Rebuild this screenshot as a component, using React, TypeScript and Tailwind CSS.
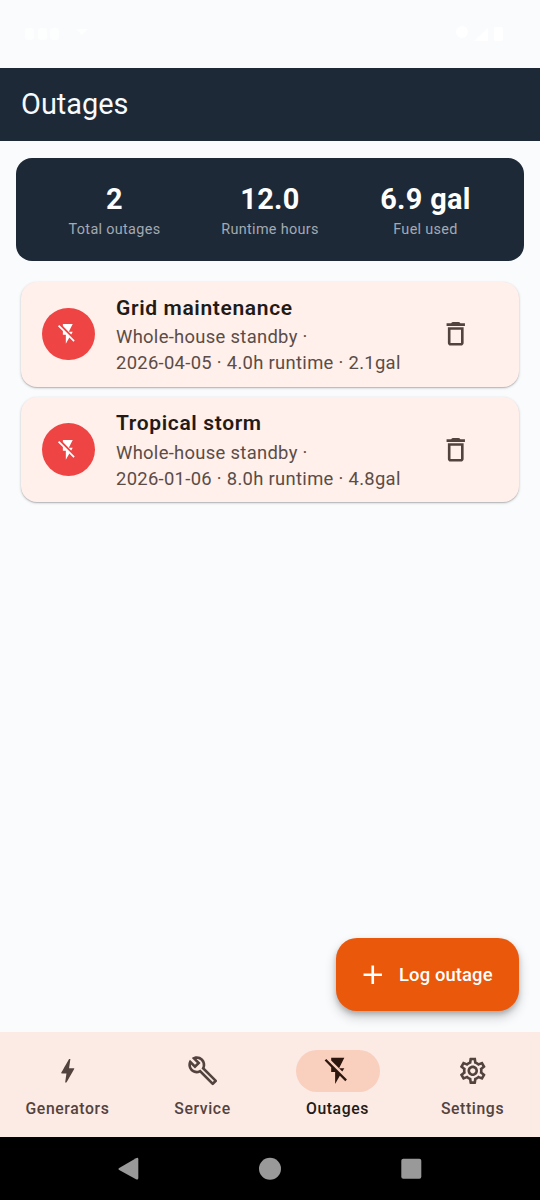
import React from 'react';
import {
  MdAdd,
  MdBolt,
  MdFlashOff,
  MdOutlineBuild,
  MdOutlineSettings,
} from 'react-icons/md';

interface Outage {
  id: string;
  title: string;
  generator: string;
  details: string;
}

const stats = [
  { label: 'Total outages', value: '2' },
  { label: 'Runtime hours', value: '12.0' },
  { label: 'Fuel used', value: '6.9 gal' },
];

const outages: Outage[] = [
  {
    id: '1',
    title: 'Grid maintenance',
    generator: 'Whole-house standby ·',
    details: '2026-04-05 · 4.0h runtime · 2.1gal',
  },
  {
    id: '2',
    title: 'Tropical storm',
    generator: 'Whole-house standby ·',
    details: '2026-01-06 · 8.0h runtime · 4.8gal',
  },
];

const tabs = [
  { label: 'Generators', icon: MdBolt },
  { label: 'Service', icon: MdOutlineBuild },
  { label: 'Outages', icon: MdFlashOff, active: true },
  { label: 'Settings', icon: MdOutlineSettings },
];

const StatusBar: React.FC = () => (
  <div className="flex h-[68px] shrink-0 items-center justify-between px-6">
    <svg width="66" height="18" viewBox="0 0 66 18" fill="#fdfefe">
      <rect x="1" y="3" width="9" height="12" rx="3" />
      <rect x="14" y="3" width="9" height="12" rx="3" />
      <rect x="26" y="3" width="9" height="12" rx="3" />
      <path d="M52 4h12l-6 6z" />
    </svg>
    <svg width="62" height="18" viewBox="0 0 62 18" fill="#ffffff">
      <circle cx="8" cy="7" r="6" />
      <path d="M20 16L34 3v13z" />
      <rect x="40" y="2" width="9" height="14" rx="2" />
    </svg>
  </div>
);

const TrashIcon: React.FC = () => (
  <svg width="31.5" height="31.5" viewBox="0 0 24 24" fill="#53433e">
    <path d="M6 19c0 1.100.900 2 2 2h8c1.100 0 2-.900 2-2V7H6v12zM8 9h8v10H8V9z" fillRule="evenodd" />
    <path d="M5 4h3.500q.500-1 1.500-1h4q1 0 1.500 1H19v2H5z" />
  </svg>
);

const OutageCard: React.FC<{ outage: Outage }> = ({ outage }) => (
  <div className="flex h-[105px] items-center rounded-[16px] bg-[#fff0eb] pl-[21px] pr-[47.5px] shadow-[0_1px_3px_rgba(0,0,0,0.2),0_1px_1px_rgba(0,0,0,0.14)]">
    <div className="flex size-[52.5px] shrink-0 items-center justify-center rounded-full bg-[#ef4444]">
      <MdFlashOff size={23.6} className="text-white" />
    </div>
    <div className="ml-[21.5px] flex-1 whitespace-nowrap pt-px">
      <h2 className="text-[21px] font-semibold leading-[31px] tracking-[0.64px] text-[#231a16]">{outage.title}</h2>
      <p className="pt-[0.5px] text-[18.4px] leading-[26.25px] tracking-[0.31px] text-[#5b4c47]">
        {outage.generator}
        <br />
        {outage.details}
      </p>
    </div>
    <button aria-label="Delete">
      <TrashIcon />
    </button>
  </div>
);

const App: React.FC = () => {
  return (
    <div className="flex h-[1200px] w-[540px] flex-col overflow-hidden bg-[#fafbfd] font-['Roboto',sans-serif]">
      <StatusBar />

      <header className="flex h-[73px] shrink-0 items-center bg-[#1e2937] pl-[21px]">
        <h1 className="text-[28.9px] leading-none text-[#f8fafc]">Outages</h1>
      </header>

      <main className="flex flex-1 flex-col">
        <section className="mx-[15.75px] mt-[16.5px] grid h-[103.5px] grid-cols-3 rounded-[16px] bg-[#1e2937] px-[21px] pt-[24px] text-center">
          {stats.map((stat) => (
            <div key={stat.label}>
              <p className="text-[28.9px] font-bold leading-[34px] tracking-[0.33px] text-white">{stat.value}</p>
              <p className="text-[14.4px] leading-[28px] tracking-[0.33px] text-[#a3aab4]">{stat.label}</p>
            </div>
          ))}
        </section>

        <section className="mx-[21px] mt-[20.5px] flex flex-col gap-[10.5px]">
          {outages.map((outage) => (
            <OutageCard key={outage.id} outage={outage} />
          ))}
        </section>

        <button className="mb-[21px] mr-[21px] mt-auto flex h-[73.5px] w-[183px] items-center self-end rounded-[21px] bg-[#ea580c] pl-[21px] text-white shadow-[0_6px_12px_rgba(0,0,0,0.2),0_3px_5px_rgba(0,0,0,0.18)]">
          <MdAdd size={31.5} />
          <span className="ml-[10.5px] pt-px text-[18.4px] font-medium tracking-[0.13px]">Log outage</span>
        </button>
      </main>

      <nav className="grid h-[105px] shrink-0 grid-cols-4 bg-[#fceae5]">
        {tabs.map(({ label, icon: Icon, active }) => (
          <div key={label} className="flex flex-col items-center pt-[18px]">
            <div
              className={
                active
                  ? 'flex h-[42px] w-[84px] items-center justify-center rounded-full bg-[#f9cfbe] text-[#2c160d]'
                  : 'flex h-[42px] w-[84px] items-center justify-center text-[#53433e]'
              }
            >
              <Icon size={31.5} />
            </div>
            <span
              className={
                active
                  ? 'mt-[6px] text-[15.75px] font-medium leading-[21px] tracking-[0.62px] text-[#231a16]'
                  : 'mt-[6px] text-[15.75px] font-medium leading-[21px] tracking-[0.62px] text-[#53433e]'
              }
            >
              {label}
            </span>
          </div>
        ))}
      </nav>

      {/* Android navigation buttons */}
      <div className="flex h-[63px] shrink-0 items-center justify-center bg-black">
        <svg width="304" height="24" viewBox="0 0 304 24" fill="#999999">
          <path d="M18 1.200Q20.300 0 20.300 2.200V21Q20.300 23.200 18 22.200L1.200 13Q-.300 12 1.200 11Z" />
          <circle cx="152" cy="11.700" r="11" />
          <rect x="283.300" y="1.700" width="20" height="20" rx="2" />
        </svg>
      </div>
    </div>
  );
};

export default App;
